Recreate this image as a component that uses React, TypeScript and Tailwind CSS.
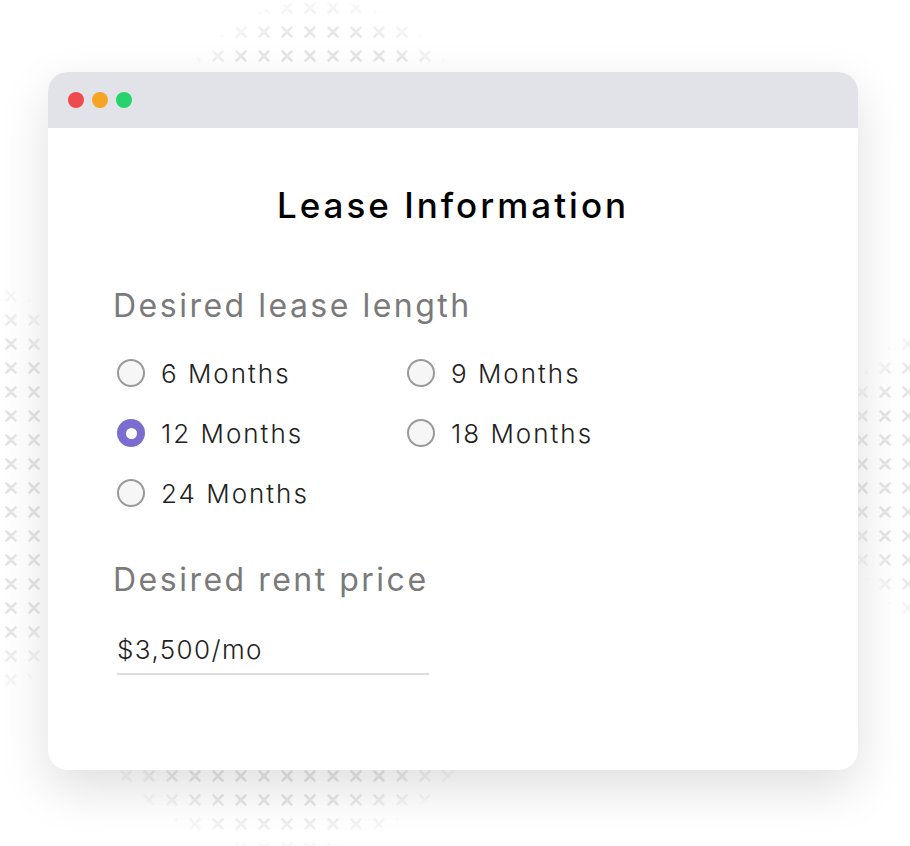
const options = [
  { label: "6 Months", checked: false },
  { label: "9 Months", checked: false },
  { label: "12 Months", checked: true },
  { label: "18 Months", checked: false },
  { label: "24 Months", checked: false },
];

function CrossPattern() {
  return (
    <svg className="absolute inset-0" width="910" height="846" viewBox="0 0 910 846">
      <defs>
        <pattern id="cross" width="23" height="24" y="-4" patternUnits="userSpaceOnUse">
          <path d="M6.5 7.5 L15.5 16.5 M15.5 7.5 L6.5 16.5" stroke="#e0e0e0" strokeWidth="2.6" strokeLinecap="round" />
        </pattern>
        <radialGradient id="fade">
          <stop offset="0%" stopColor="#fff" stopOpacity="1" />
          <stop offset="80%" stopColor="#fff" stopOpacity="0.8" />
          <stop offset="100%" stopColor="#fff" stopOpacity="0.2" />
        </radialGradient>
        <mask id="fadeMask">
          <circle cx="320" cy="160" r="160" fill="url(#fade)" />
          <circle cx="-100" cy="490" r="230" fill="url(#fade)" />
          <circle cx="1000" cy="475" r="170" fill="url(#fade)" />
          <circle cx="285" cy="625" r="225" fill="url(#fade)" />
        </mask>
      </defs>
      <g mask="url(#fadeMask)">
        <circle cx="320" cy="160" r="160" fill="url(#cross)" />
        <circle cx="-100" cy="490" r="230" fill="url(#cross)" />
        <circle cx="1000" cy="475" r="170" fill="url(#cross)" />
        <circle cx="285" cy="625" r="225" fill="url(#cross)" />
      </g>
    </svg>
  );
}

function Radio({ checked }: { checked: boolean }) {
  if (checked) {
    return (
      <span className="w-[28px] h-[28px] rounded-full bg-[#7b6dd0] flex items-center justify-center">
        <span className="w-[11px] h-[11px] rounded-full bg-white" />
      </span>
    );
  }
  return <span className="w-[28px] h-[28px] rounded-full border-2 border-[#9a9a9a] bg-[#f6f6f6]" />;
}

export default function App() {
  return (
    <div className="relative w-[910px] h-[846px] bg-white overflow-hidden">
      <CrossPattern />
      <div className="relative pt-[72px] pl-[48px]">
        <div className="w-[810px] h-[698px] rounded-[20px] bg-white overflow-hidden shadow-[0_18px_50px_rgba(0,0,0,0.13)]">
          <div className="h-[56px] bg-[#e2e3e8] flex items-center gap-[8px] pl-[20px]">
            <span className="w-[16px] h-[16px] rounded-full bg-[#ef4b4f]" />
            <span className="w-[16px] h-[16px] rounded-full bg-[#f5a524]" />
            <span className="w-[16px] h-[16px] rounded-full bg-[#27d36c]" />
          </div>
          <div className="px-[65px] pt-[54px]">
            <h1 className="text-center text-[35px] leading-[46px] font-medium tracking-[3px] text-black font-['Inter',sans-serif]">
              Lease Information
            </h1>
            <h2 className="mt-[57px] text-[32px] leading-[42px] text-[#7a7a7a] tracking-[2.5px] font-['Inter',sans-serif]">
              Desired lease length
            </h2>
            <div className="mt-[28px] grid grid-cols-[290px_290px] gap-y-[24px] pl-[4px]">
              {options.map((o) => (
                <label key={o.label} className="flex items-center gap-[16px] h-[36px]">
                  <Radio checked={o.checked} />
                  <span className="text-[26px] text-[#222] tracking-[2px] font-light font-['Inter',sans-serif]">
                    {o.label}
                  </span>
                </label>
              ))}
            </div>
            <h2 className="mt-[48px] text-[32px] leading-[42px] text-[#7a7a7a] tracking-[2.5px] font-['Inter',sans-serif]">
              Desired rent price
            </h2>
            <div className="mt-[29px] ml-[4px] w-[312px] border-b-2 border-[#dddddd] pb-[4px]">
              <span className="text-[26px] text-[#222] font-light tracking-[1.4px] font-['Inter',sans-serif]">
                $3,500/mo
              </span>
            </div>
          </div>
        </div>
      </div>
    </div>
  );
}
